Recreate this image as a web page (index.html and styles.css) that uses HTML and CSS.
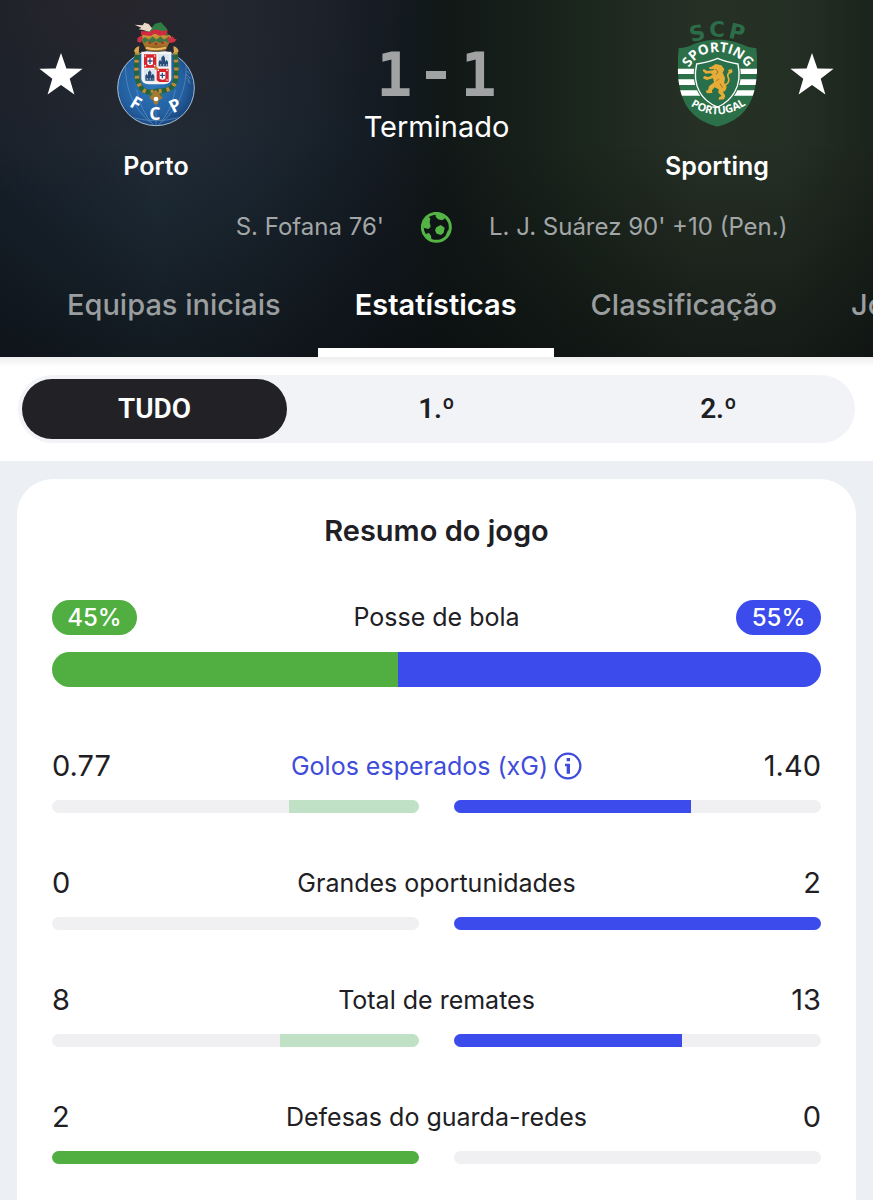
FILE: index.html
```html
<!DOCTYPE html>
<html lang="pt">
<head>
<meta charset="utf-8">
<meta name="viewport" content="width=device-width, initial-scale=1">
<title>Porto 1 - 1 Sporting</title>
<link rel="stylesheet" href="styles.css">
</head>
<body>
<header class="match">
  <div class="match-top">
    <div class="team team-home">
      <button class="star" type="button" aria-label="Seguir Porto">
        <svg viewBox="0 0 44 42"><path d="M22 0l5.4 15.4 16.2.4-12.9 9.9 4.7 15.7L22 32.1 8.6 41.4l4.7-15.7L.4 15.8l16.2-.4z"/></svg>
      </button>
      <svg class="crest" viewBox="48 34 240 318" role="img" aria-label="Porto">
        <defs>
          <radialGradient id="ball" cx=".45" cy=".45" r=".6"><stop offset="0" stop-color="#2f78bd"/><stop offset=".7" stop-color="#235f9f"/><stop offset="1" stop-color="#173f74"/></radialGradient>
          <linearGradient id="gold" x1="0" y1="0" x2="0" y2="1"><stop offset="0" stop-color="#d9a03c"/><stop offset="1" stop-color="#85551b"/></linearGradient>
        </defs>
        <ellipse cx="168" cy="235" rx="115" ry="113" fill="url(#ball)" stroke="#a9bfd6" stroke-width="3"/>
        <g fill="none" stroke="#5f92c6" stroke-width="2">
          <path d="M77 166Q74 270 150 338M258 166Q262 270 186 338M110 240Q120 300 160 346M226 240Q216 300 176 346M168 280V348M100 324Q168 342 236 324"/>
        </g>
        <path d="M261 185l8 8M258 194l14 13M259 204l12 12M263 214l8 8" stroke="#9cc0e4" stroke-width="2" stroke-dasharray="4 2"/>
        <path d="M112 126Q104 196 118 226T168 244Q208 246 221 226T226 126" fill="none" stroke="#24653e" stroke-width="15"/>
        <path d="M112 126Q104 196 118 226T168 244Q208 246 221 226T226 126" fill="none" stroke="#c08a38" stroke-width="13" stroke-dasharray="9 15"/>
        <path d="M102 126q2-14 16-16l-2 20zM236 126q-2-14-16-16l2 20z" fill="#d6a653"/>
        <path d="M124 126h90v82q-2 14-22 16h-46q-20-2-22-16z" fill="#f5f3f1"/>
        <path d="M132 134h37v40h-37zM170 177h36v40h-28l-8-5z" fill="#d5242c"/>
        <path d="M174 134h34v38h-34zM132 178h34v38h-20q-14 0-14-12z" fill="#d9e6f0"/>
        <g fill="#fff"><path d="M142 144h17v20q-8 6-17 0zM179 187h17v20q-8 6-17 0z"/><circle cx="136" cy="139" r="2.5"/><circle cx="164" cy="139" r="2.5"/><circle cx="136" cy="168" r="2.5"/><circle cx="164" cy="168" r="2.5"/><circle cx="175" cy="182" r="2.5"/><circle cx="201" cy="182" r="2.5"/><circle cx="201" cy="211" r="2.5"/></g>
        <path d="M150 146v17M143 154h15M187 189v17M180 197h15" stroke="#2b5189" stroke-width="4"/>
        <path d="M176 170v-14l4-6 4 6v-12l6-7 5 7v12l4-6 5 6v14zM136 213v-15l4-6 4 6v-10l5-6 5 6v10l4-6 5 6v15z" fill="#284b78"/>
        <path d="M180 166h23M140 208h20" stroke="#f3f3f3" stroke-width="3" stroke-dasharray="4 5"/>
        <circle cx="169" cy="176" r="5" fill="#c3882b"/>
        <path d="M128 98q-10-18 0-22 34-12 80 0 11 5 0 22l-10 24q-30 8-60 0z" fill="url(#gold)"/>
        <path d="M125 91l10-9 12 8 11-10 11 10 13-10 10 10 12-8 8 9-8 9-12-6-12 7-12-7-12 7-12-7-10 7z" fill="#3e7745"/>
        <path d="M138 114q31 9 60 0" stroke="#e9bd69" stroke-width="6" fill="none"/>
        <path d="M145 99h8M164 102h8M184 99h8" stroke="#ad2730" stroke-width="6"/>
        <path d="M133 76q-2-18 22-22l10-12 18-4q8 9 18 19l2 22q-32-10-70-3z" fill="#307e45"/>
        <path d="M104 45l24 2 5-8 13 4 10 13-8 10-19-5-13-2 8-5z" fill="#ead8c8"/>
        <path d="M123 64l26 2 17-7 24 6 13-5-4 16-23 2-10-7-14 8-29-4z" fill="#d32940"/>
        <path d="M112 86l10-8 7 5-6 16-11-3zM205 78l6 7 8-6 3 8 8 2-7 9-15 2-6-13z" fill="#cf3341"/>
        <path d="M166 240l12 9 10 16-11 7-5 12h-9l-4-12-11-6 8-15z" fill="#a87930"/>
        <path d="M157 250l-9 9M180 252l8 9" stroke="#3f7644" stroke-width="6"/>
        <circle cx="168" cy="268" r="7" fill="#fff"/>
        <g class="crest-text" font-size="53" fill="#fff" text-anchor="middle"><text transform="translate(99 296) rotate(30)">F</text><text x="165" y="331">C</text><text transform="translate(234 304) rotate(-28)">P</text></g>
      </svg>
      <span class="team-name">Porto</span>
    </div>

    <div class="result">
      <div class="score"><span>1</span><span class="dash"></span><span>1</span></div>
      <div class="status">Terminado</div>
    </div>

    <div class="team team-away">
      <svg class="crest" viewBox="48 34 240 318" role="img" aria-label="Sporting">
        <defs>
          <path id="arc-top" d="M83 177Q110 127 170 127Q230 127 259 177"/>
          <path id="arc-low" d="M78 281Q170 348 266 278"/>
          <clipPath id="shield"><path d="M53 116Q78 114 98 103Q170 76 240 103Q263 115 286 116Q298 243 253 301Q227 336 169 351Q111 336 85 301Q40 243 53 116z"/></clipPath>
        </defs>
        <g clip-path="url(#shield)">
          <path d="M40 80h260v280H40z" fill="#2b7048"/>
          <path d="M40 177h260v16H40zM40 209h260v17H40zM40 242h260v16H40z" fill="#fff"/>
        </g>
        <g class="crest-wide" font-size="64" fill="#2d6c49" text-anchor="middle"><text transform="translate(114 92) rotate(-14)">S</text><text x="168" y="82">C</text><text transform="translate(223 89) rotate(13)">P</text></g>
        <path d="M107 163Q145 157 170 146Q196 157 231 163Q241 212 221 247Q203 278 170 292Q133 278 116 247Q96 211 107 163z" fill="#2b7048" stroke="#2b7048" stroke-width="10"/>
        <path d="M107 163Q145 157 170 146Q196 157 231 163Q241 212 221 247Q203 278 170 292Q133 278 116 247Q96 211 107 163z" fill="#28704b" stroke="#fff" stroke-width="4"/>
        <path d="M151 171l13-8 17 4 9 12-5 10 7 15-2 17 7 10-3 11-8 5 7 12-4 10-16 1 1-7 8-4-10-10 1-10-12-6-8 9 1 8-16 1-4-8 7-1 3-12 15-12-3-12-19 5-11-5 3-7 14 3 12-7-6-4-15 1-9-9 3-5 11 6 17-2 5-4-14 1-4-5z" fill="#e5ad37"/>
        <path d="M187 227q19-4 16-21-7-12 4-19" fill="none" stroke="#e5ad37" stroke-width="5"/>
        <path d="M201 181l11-3 3 9-9 6z" fill="#e5ad37"/>
        <path d="M164 178l7 9-6 8M174 207l-8 8M177 222l8 12" fill="none" stroke="#946e2b" stroke-width="3"/>
        <text class="crest-text" font-size="41" fill="#fff"><textPath href="#arc-top" startOffset="50%" text-anchor="middle">SPORTING</textPath></text>
        <text class="crest-text" font-size="33" fill="#fff"><textPath href="#arc-low" startOffset="50%" text-anchor="middle">PORTUGAL</textPath></text>
      </svg>
      <button class="star" type="button" aria-label="Seguir Sporting">
        <svg viewBox="0 0 44 42"><path d="M22 0l5.4 15.4 16.2.4-12.9 9.9 4.7 15.7L22 32.1 8.6 41.4l4.7-15.7L.4 15.8l16.2-.4z"/></svg>
      </button>
      <span class="team-name">Sporting</span>
    </div>
  </div>

  <div class="goals">
    <span class="goal-home">S. Fofana 76'</span>
    <svg class="goal-icon" viewBox="0 0 93 93" role="img" aria-label="Golo">
      <circle cx="46" cy="46" r="42" fill="none" stroke="#54b445" stroke-width="9"/>
      <path d="M44 6h26l1 14-8 5-12-3-7-8zM8 30l12-16 8 5-2 12 3 13-6 7-14-3zM46 46l13-7 12 8-3 15-8 7-13-4-5-10zM14 66l10-3 6 8 1 10-8 1zM80 56l6-3-2 13-9 9 1-9z" fill="#54b445"/>
    </svg>
    <span>L. J. Suárez 90' +10 (Pen.)</span>
  </div>

  <nav class="tabs">
    <a class="tab" href="#equipas">Equipas iniciais</a>
    <a class="tab tab-active" href="#estatisticas" aria-current="page">Estatísticas</a>
    <a class="tab" href="#classificacao">Classificação</a>
    <a class="tab" href="#jogos">Jogos</a>
  </nav>
</header>

<div class="periods">
  <div class="segment">
    <button class="period period-active" type="button" aria-pressed="true">TUDO</button>
    <button class="period" type="button" aria-pressed="false">1.º</button>
    <button class="period" type="button" aria-pressed="false">2.º</button>
  </div>
</div>

<main class="page">
  <section class="card">
    <h2 class="card-title">Resumo do jogo</h2>

    <div class="possession">
      <div class="stat-line">
        <span class="pill pill-home">45%</span>
        <span class="stat-name">Posse de bola</span>
        <span class="pill pill-away">55%</span>
      </div>
      <div class="share">
        <div class="share-home" style="width:45%"></div>
        <div class="share-away"></div>
      </div>
    </div>

    <div class="stats">
      <div class="stat">
        <div class="stat-line">
          <span class="value">0.77</span>
          <button class="stat-name stat-info" type="button">Golos esperados (xG)
            <svg class="info" viewBox="0 0 84 84"><circle cx="42" cy="42" r="37" fill="none" stroke="currentColor" stroke-width="7"/><path d="M38 18h10v10H38zM33 35h15v30H38V43h-5z" fill="currentColor"/></svg>
          </button>
          <span class="value value-away">1.40</span>
        </div>
        <div class="bars">
          <div class="bar bar-home"><div class="fill fill-pale" style="width:35.5%"></div></div>
          <div class="bar"><div class="fill fill-blue" style="width:64.5%"></div></div>
        </div>
      </div>
      <div class="stat">
        <div class="stat-line">
          <span class="value">0</span>
          <span class="stat-name">Grandes oportunidades</span>
          <span class="value value-away">2</span>
        </div>
        <div class="bars">
          <div class="bar bar-home"></div>
          <div class="bar"><div class="fill fill-blue" style="width:100%"></div></div>
        </div>
      </div>
      <div class="stat">
        <div class="stat-line">
          <span class="value">8</span>
          <span class="stat-name">Total de remates</span>
          <span class="value value-away">13</span>
        </div>
        <div class="bars">
          <div class="bar bar-home"><div class="fill fill-pale" style="width:38%"></div></div>
          <div class="bar"><div class="fill fill-blue" style="width:62%"></div></div>
        </div>
      </div>
      <div class="stat">
        <div class="stat-line">
          <span class="value">2</span>
          <span class="stat-name">Defesas do guarda-redes</span>
          <span class="value value-away">0</span>
        </div>
        <div class="bars">
          <div class="bar bar-home"><div class="fill fill-green" style="width:100%"></div></div>
          <div class="bar"></div>
        </div>
      </div>
    </div>
  </section>
</main>
</body>
</html>
```
FILE: styles.css
```css
* { box-sizing: border-box; }

body {
  margin: 0;
  background: #ecf0f5;
  color: #202024;
  font-family: Inter, "Liberation Sans", sans-serif;
  font-size: 25px;
  line-height: 36px;
}

button {
  margin: 0;
  padding: 0;
  border: 0;
  background: none;
  color: inherit;
  font: inherit;
  cursor: pointer;
}

svg { display: block; }

/* Header */
.match {
  padding-top: 21px;
  overflow: hidden;
  color: #fff;
  background:
    linear-gradient(180deg, rgba(8, 10, 12, 0) 40%, rgba(8, 10, 12, 0.55) 100%),
    radial-gradient(ellipse 34% 60% at 13% 0%, rgba(40, 36, 42, 0.9), rgba(40, 36, 42, 0) 100%),
    linear-gradient(90deg, #16202b 0%, #1f2d39 18%, #1c2833 28%, #141b23 43%, #111817 51%, #1b261d 67%, #263025 80%, #253025 90%, #1b241c 100%);
}

.match-top {
  display: flex;
  justify-content: space-between;
  padding: 0 39px;
}

.team {
  display: grid;
  grid-template-columns: 44px 104px;
  column-gap: 21px;
  row-gap: 21px;
  align-items: center;
  justify-items: center;
}

.team-away { grid-template-columns: 104px 44px; }

.team-home .team-name { grid-column: 2; }

.team-name { font-weight: 600; }

.crest { width: 80px; height: 106px; overflow: visible; }

.crest-text { font-family: "Open Sans", sans-serif; font-weight: 700; }

.crest-wide { font-family: "DejaVu Sans", sans-serif; font-weight: 700; }

.star svg { width: 44px; height: 42px; fill: #fff; }

.result { padding-top: 24px; text-align: center; }

.score {
  display: flex;
  align-items: center;
  justify-content: center;
  gap: 14px;
  color: #a0a2a3;
  font: 700 60px/60px "DejaVu Sans Mono", monospace;
}

.dash { width: 20px; height: 8px; background: currentColor; }

.status { margin-top: 4px; font-size: 29px; }

.goals {
  display: grid;
  grid-template-columns: 1fr auto 1fr;
  align-items: center;
  gap: 37px;
  margin-top: 25px;
  color: #a3a6a7;
  font-size: 24px;
}

.goal-home { text-align: right; }

.goal-icon { width: 31px; height: 31px; }

.tabs {
  display: flex;
  margin-top: 18px;
  padding-left: 30px;
  font-size: 29px;
  font-weight: 500;
  white-space: nowrap;
}

.tab {
  flex: none;
  padding: 24px 37px 25px;
  border-bottom: 9px solid transparent;
  color: #9b9e9f;
  text-decoration: none;
}

.tab-active { border-color: #fff; color: #fff; font-weight: 600; }

/* Period switch */
.periods {
  padding: 18px;
  background: linear-gradient(#eeeeef, #fff 10px);
}

.segment {
  display: grid;
  grid-template-columns: repeat(3, 1fr);
  gap: 17px;
  padding: 4px;
  border-radius: 34px;
  background: #f2f3f7;
}

.period {
  height: 60px;
  border-radius: 30px;
  font-family: Roboto, sans-serif;
  font-size: 28px;
  font-weight: 600;
}

.period-active { background: #222226; color: #fff; }

/* Summary card */
.page { padding: 18px 17px 0; }

.card {
  padding: 34px 35px 36px;
  border-radius: 36px 36px 0 0;
  background: #fff;
}

.card-title {
  margin: 0;
  text-align: center;
  font-size: 29px;
  font-weight: 600;
  line-height: 36px;
}

.possession { margin: 50px 0 61px; }

.stat-line {
  display: grid;
  grid-template-columns: 1fr auto 1fr;
  align-items: center;
}

.pill {
  width: 85px;
  border-radius: 18px;
  color: #fff;
  text-align: center;
  font-size: 24px;
  font-weight: 500;
  line-height: 35px;
}

.pill-home { background: #51af42; }

.pill-away { justify-self: end; background: #3b4bec; }

.share {
  display: flex;
  height: 35px;
  margin-top: 17px;
  border-radius: 18px;
  overflow: hidden;
}

.share-home { background: #51af42; }

.share-away { flex: 1; background: #3b4bec; }

.stats { display: grid; gap: 52px; }

.value { font-size: 29px; }

.value-away { text-align: right; }

.stat-info {
  display: flex;
  align-items: center;
  gap: 6px;
  color: #3f4cda;
}

.info { width: 28px; height: 28px; }

.bars {
  display: grid;
  grid-template-columns: 1fr 1fr;
  gap: 35px;
  margin-top: 16px;
}

.bar {
  display: flex;
  height: 13px;
  border-radius: 7px;
  overflow: hidden;
  background: #f0f0f3;
}

.bar-home { justify-content: flex-end; }

.fill-pale { background: #c1e1c6; }

.fill-green { background: #51af42; }

.fill-blue { background: #3b4bec; }
```
